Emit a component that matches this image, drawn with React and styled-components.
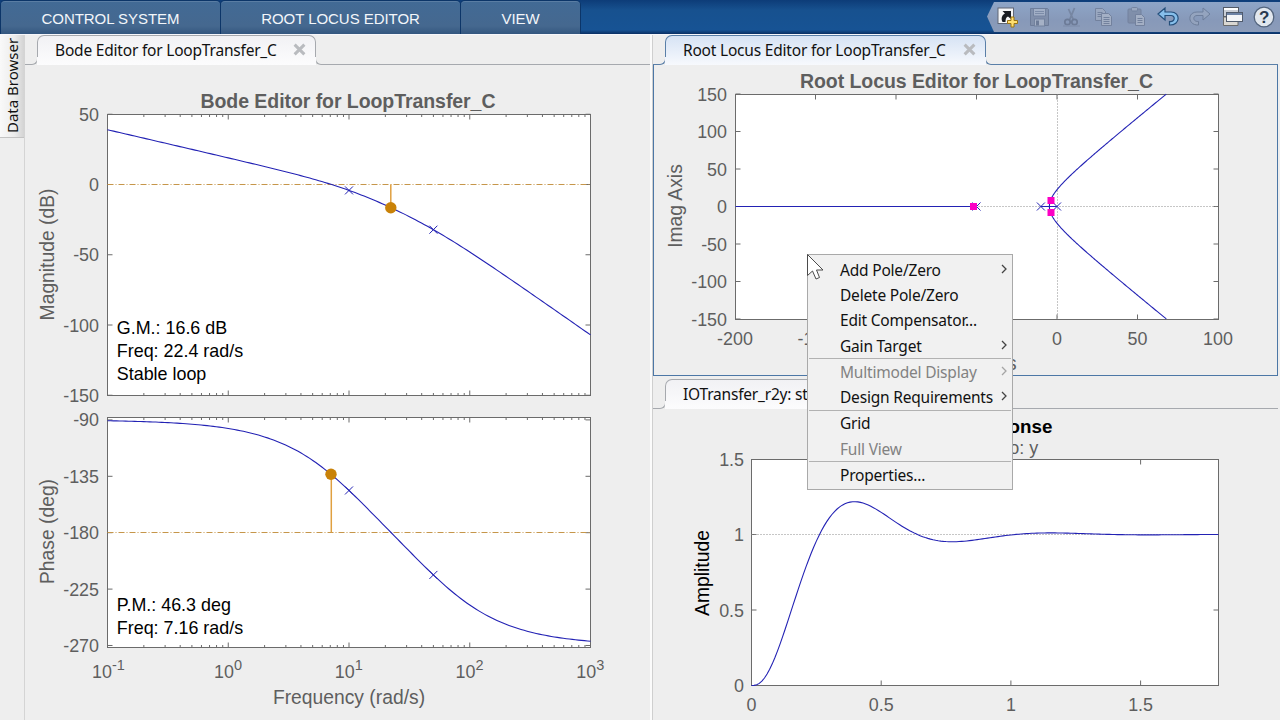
import React from 'react'
import styled, { createGlobalStyle } from 'styled-components'

const GlobalStyle = createGlobalStyle`
  * {
    box-sizing: border-box;
  }

  body {
    margin: 0;
    overflow: hidden;
    background: #eeeeee;
  }
`

const BLUE = '#2322b4'
const AXIS = '#6b6b6b'
const LABEL = '#5e5e5e'
const ORANGE = '#c98208'

const decades = [-1, 0, 1, 2, 3]
const toPath = (points) =>
  'M' + points.map(([x, y]) => `${x.toFixed(2)},${y.toFixed(2)}`).join('L')

const range = (from, to, count) =>
  Array.from({ length: count + 1 }, (_, i) => from + ((to - from) * i) / count)

// open loop: K / (s (s/10 + 1) (s/50 + 1))
const K = 8.896
const magnitude = (w) =>
  20 * Math.log10(K / (w * Math.hypot(1, w / 10) * Math.hypot(1, w / 50)))
const phase = (w) =>
  -90 - ((Math.atan(w / 10) + Math.atan(w / 50)) * 180) / Math.PI

const freqX = (w) => 82.5 + (Math.log10(w) + 1) * 120.75
const magY = (db) => 119.5 - db * 1.405
const phaseY = (deg) => 354.9 - (deg + 90) * 1.2533
const freqs = range(-1, 3, 160).map((e) => 10 ** e)

const realX = (v) => 404 + v * 1.61
const imagY = (v) => 141.5 - v * 0.75
const locus = range(0, 1, 150).map((t) => {
  const re = -4.7247 + (67.9 + 4.7247) * t * t
  return [re, Math.sqrt(Math.max(0, 500 + 120 * re + 3 * re * re))]
})

const timeX = (t) => 98.5 + t * 259.4
const ampY = (v) => 276.5 - v * 151

const stepResponse = () => {
  const k = K * 500
  const dt = 0.0005
  const points = []
  let [y, v, a] = [0, 0, 0]
  for (let i = 0; i <= 3600; i++) {
    if (i % 20 === 0) points.push([timeX(i * dt), ampY(y)])
    a += dt * (k - 60 * a - 500 * v - k * y)
    v += dt * a
    y += dt * v
  }
  return points
}

const Ticks = ({ x1, x2, y1, y2, xs = [], ys = [], size = 5 }) => (
  <g stroke={AXIS}>
    {xs.map((x) => (
      <path key={x} d={`M${x},${y1}v${size}M${x},${y2}v${-size}`} />
    ))}
    {ys.map((y) => (
      <path key={y} d={`M${x1},${y}h${size}M${x2},${y}h${-size}`} />
    ))}
  </g>
)

const Box = ({ x1, x2, y1, y2 }) => (
  <rect x={x1} y={y1} width={x2 - x1} height={y2 - y1} fill="#fff" stroke={AXIS} />
)

const Cross = ({ x, y }) => (
  <path d={`M${x - 4},${y - 4}l8,8m0,-8l-8,8`} stroke={BLUE} fill="none" />
)

const minorXs = decades
  .slice(0, 4)
  .flatMap((d) => [2, 3, 4, 5, 6, 7, 8, 9].map((m) => freqX(m * 10 ** d)))
const majorXs = [0, 1, 2].map((d) => freqX(10 ** d))

const BodePlot = () => {
  const mag = { x1: 82.5, x2: 565.5, y1: 49.5, y2: 330.5 }
  const ph = { x1: 82.5, x2: 565.5, y1: 352.5, y2: 582.5 }
  return (
    <Chart>
      <Title x="323" y="42.500" textLength="295">
        Bode Editor for LoopTransfer_C
      </Title>
      <Box {...mag} />
      <Ticks {...mag} xs={minorXs} size={2.5} />
      <Ticks {...mag} xs={majorXs} ys={[50, 0, -50, -100, -150].map(magY)} />
      {[50, 0, -50, -100, -150].map((v) => (
        <Tick key={v} x="74" y={magY(v) + 6.5} $end>
          {v}
        </Tick>
      ))}
      <DashDot d="M82.500,119.500H565.500" />
      <path d="M365.800,119.500v23" stroke="#e0a040" strokeWidth="1.5" />
      <Curve d={toPath(freqs.map((w) => [freqX(w), magY(magnitude(w))]))} />
      <Cross x={freqX(10)} y={magY(magnitude(10))} />
      <Cross x={freqX(50)} y={magY(magnitude(50))} />
      <circle cx="365.800" cy="142.700" r="5.700" fill={ORANGE} />
      <Note x="91.800" y="269.400">G.M.: 16.6 dB</Note>
      <Note x="91.800" y="292.400">Freq: 22.4 rad/s</Note>
      <Note x="91.800" y="315">Stable loop</Note>
      <AxisLabel transform="translate(28.500 189.500) rotate(-90)">Magnitude (dB)</AxisLabel>

      <Box {...ph} />
      <Ticks {...ph} xs={minorXs} size={2.5} />
      <Ticks {...ph} xs={majorXs} ys={[-90, -135, -180, -225, -270].map(phaseY)} />
      {[-90, -135, -180, -225, -270].map((v) => (
        <Tick key={v} x="74" y={phaseY(v) + 6.5} $end>
          {v}
        </Tick>
      ))}
      <DashDot d="M82.500,467.500H565.500" />
      <path d="M306.300,409v58.500" stroke="#e0a040" strokeWidth="1.500" />
      <Curve d={toPath(freqs.map((w) => [freqX(w), phaseY(phase(w))]))} />
      <Cross x={freqX(10)} y={phaseY(phase(10))} />
      <Cross x={freqX(50)} y={phaseY(phase(50))} />
      <circle cx="306" cy="409.300" r="5.700" fill={ORANGE} />
      <Note x="91.800" y="546.400">P.M.: 46.3 deg</Note>
      <Note x="91.800" y="569.400">Freq: 7.16 rad/s</Note>
      <AxisLabel transform="translate(28.500 466.500) rotate(-90)">Phase (deg)</AxisLabel>
      {decades.map((d) => (
        <Tick key={d} x={freqX(10 ** d) - (d < 0 ? 15.5 : 14.2)} y="612.700">
          10
          <tspan dy="-7.800" fontSize="14.500">
            {d}
          </tspan>
        </Tick>
      ))}
      <AxisLabel x="324" y="638.500">Frequency (rad/s)</AxisLabel>
    </Chart>
  )
}

const RootLocusPlot = () => {
  const box = { x1: 82.5, x2: 565.5, y1: 29.5, y2: 254.5 }
  const reals = [-200, -150, -100, -50, 0, 50, 100]
  const imags = [150, 100, 50, 0, -50, -100, -150]
  return (
    <Chart>
      <Title x="323.500" y="22.500" textLength="353">
        Root Locus Editor for LoopTransfer_C
      </Title>
      <Box {...box} />
      <Ticks {...box} xs={reals.slice(1, 6).map(realX)} ys={imags.map(imagY)} />
      <Dotted d="M82.500,141.500H565.500M404.500,29.500V254.500" />
      {imags.map((v) => (
        <Tick key={v} x="74" y={imagY(v) + 6.5} $end>
          {v}
        </Tick>
      ))}
      {reals.map((v) => (
        <Tick key={v} x={realX(v)} y="280" $middle>
          {v}
        </Tick>
      ))}
      <Curve d={`M82.500,141.500H${realX(-50)}M${realX(-10)},141.500H${realX(0)}`} />
      <Curve d={toPath(locus.map(([re, im]) => [realX(re), imagY(im)]))} />
      <Curve d={toPath(locus.map(([re, im]) => [realX(re), imagY(-im)]))} />
      {[-50, -10, 0].map((v) => (
        <Cross key={v} x={realX(v)} y={141.5} />
      ))}
      {[
        [320.5, 141.5],
        [398, 135.5],
        [398, 147.5],
      ].map(([x, y]) => (
        <rect key={`${x}${y}`} x={x - 3.5} y={y - 3.5} width="7" height="7" fill="#fb00c4" />
      ))}
      <AxisLabel transform="translate(28.500 141) rotate(-90)">Imag Axis</AxisLabel>
      <AxisLabel x="323.500" y="305">Real Axis</AxisLabel>
    </Chart>
  )
}

const StepPlot = () => {
  const box = { x1: 98.5, x2: 565.5, y1: 50.5, y2: 276.5 }
  const times = [0, 0.5, 1, 1.5]
  const amps = [0, 0.5, 1, 1.5]
  return (
    <Chart>
      <Title x="331.500" y="23.500" $dark>
        Step Response
      </Title>
      <Subtitle x="335" y="44.500">From: r  To: y</Subtitle>
      <Box {...box} />
      <Ticks {...box} xs={times.map(timeX)} ys={amps.slice(0, 3).map(ampY)} />
      <Dotted d="M98.500,125.500H565.500" />
      <Curve d={toPath(stepResponse())} />
      {amps.map((v) => (
        <Tick key={v} x="91" y={ampY(v) + 6.5} $end>
          {v}
        </Tick>
      ))}
      {times.map((v) => (
        <Tick key={v} x={timeX(v)} y="302.400" $middle>
          {v}
        </Tick>
      ))}
      <AxisLabel transform="translate(56 164) rotate(-90)" $dark>
        Amplitude
      </AxisLabel>
    </Chart>
  )
}

const NewIcon = () => (
  <ToolIcon>
    <rect x="2" y="2" width="15.500" height="15.500" fill="#f4f5f7" stroke="#606775" />
    <path d="M6.500,16C4.500,12 6.500,8.500 9,7.500L6.500,5H15V13L12,10.500C10,11.500 9.500,13 9.500,16z" fill="#171b22" />
    <path d="M15,11h3v3.500h3.500v3h-3.500v3.500h-3v-3.500h-3.500v-3h3.500z" fill="#ffdf70" stroke="#9b7413" />
  </ToolIcon>
)

const SaveIcon = () => (
  <ToolIcon $dim>
    <path d="M2.500,2.500h17l1,1v16h-18z" fill="#7c89a2" stroke="#5d6b86" />
    <path d="M5.500,3v7h12v-7" fill="#b1bacb" stroke="#66748f" />
    <path d="M7,5.500h9M7,7.500h9" stroke="#75829b" />
    <rect x="6.500" y="13" width="10" height="7" fill="#b8c0cf" stroke="#66748f" />
    <rect x="8" y="14.500" width="3" height="5" fill="#5d6b85" />
  </ToolIcon>
)

const CutIcon = () => (
  <ToolIcon $dim>
    <path d="M14.500,2L9.500,14M8.500,3L13.500,14" fill="none" stroke="#6b7891" strokeWidth="1.800" />
    <circle cx="7.500" cy="16" r="2.700" fill="none" stroke="#5c6983" strokeWidth="1.700" />
    <circle cx="14.500" cy="16" r="2.700" fill="none" stroke="#5c6983" strokeWidth="1.700" />
    <path d="M3,20h17" stroke="#7684a0" strokeWidth="2" opacity="0.500" />
  </ToolIcon>
)

const CopyIcon = () => (
  <ToolIcon $dim>
    <path d="M3.500,2.500h7l3,3v9h-10z" fill="#a5afc2" stroke="#66738d" />
    <path d="M5.500,6.500h5M5.500,8.500h5M5.500,10.500h5" stroke="#66738d" />
    <path d="M9.500,7.500h7l3,3v9h-10z" fill="#b5bdcc" stroke="#66738d" />
    <path d="M11.500,11.500h6M11.500,13.500h6M11.500,15.500h6M11.500,17.500h6" stroke="#66738d" />
  </ToolIcon>
)

const PasteIcon = () => (
  <ToolIcon $dim>
    <rect x="3" y="3" width="13" height="14" rx="1" fill="#7a879f" stroke="#66738d" />
    <rect x="6.500" y="1.500" width="6" height="3.500" rx="1" fill="#a2adc0" stroke="#66738d" />
    <path d="M10.500,8.500h6l3,3v8h-9z" fill="#b5bdcc" stroke="#66738d" />
    <path d="M12.500,12.500h5M12.500,14.500h5M12.500,16.500h5" stroke="#66738d" />
  </ToolIcon>
)

const arrow = 'M1,8L8,2V6H14C24,6 23.500,19.500 12.500,19V15.500C18.500,16 18.500,9.500 14,9.500H8V14z'

const UndoIcon = () => (
  <ToolIcon>
    <path d={arrow} fill="#86bfeb" stroke="#244f7b" strokeWidth="1.200" />
  </ToolIcon>
)

const RedoIcon = () => (
  <ToolIcon $dim>
    <path d={arrow} transform="matrix(-1 0 0 1 22 0)" fill="#9ba9c0" stroke="#5d6d88" />
  </ToolIcon>
)

const WindowsIcon = () => (
  <ToolIcon>
    <rect x="2.500" y="1.500" width="15" height="9" fill="#c9ced6" stroke="#525a67" />
    <path d="M3,3h14" stroke="#fff" strokeWidth="2" />
    <path d="M2.500,11V19.500H17V11z" fill="#d9d7d2" stroke="#6a6b6c" />
    <rect x="5.500" y="6.500" width="16" height="9" fill="#f3f5f8" stroke="#505b6c" />
    <path d="M6,8h15" stroke="#6d83a6" strokeWidth="2" />
  </ToolIcon>
)

const HelpIcon = () => (
  <ToolIcon>
    <circle cx="11" cy="11" r="9.800" fill="#e1e7ee" stroke="#53657e" strokeWidth="1.300" />
    <text x="11" y="17" textAnchor="middle" fontFamily="Liberation Sans, sans-serif" fontSize="17" fontWeight="700" fill="#27394f">
      ?
    </text>
  </ToolIcon>
)

const Panel = ({ title, width, active, closable = true, children }) => (
  <PanelFrame>
    <TabStrip>
      <StripLead $active={active} />
      <Tab $active={active} $width={width}>
        {title}
        {closable && (
          <CloseIcon viewBox="0 0 12 12">
            <path d="M1.500,1.500L10.500,10.500M10.500,1.500L1.500,10.500" />
          </CloseIcon>
        )}
      </Tab>
      <StripTail $active={active} />
    </TabStrip>
    <PanelBody $active={active}>{children}</PanelBody>
  </PanelFrame>
)

const menuGroups = [
  [
    { label: 'Add Pole/Zero', submenu: true },
    { label: 'Delete Pole/Zero' },
    { label: 'Edit Compensator...' },
    { label: 'Gain Target', submenu: true },
  ],
  [
    { label: 'Multimodel Display', submenu: true, disabled: true },
    { label: 'Design Requirements', submenu: true },
  ],
  [{ label: 'Grid' }, { label: 'Full View', disabled: true }],
  [{ label: 'Properties...' }],
]

const ContextMenu = () => (
  <Menu>
    {menuGroups.map((group) => (
      <MenuGroup key={group[0].label}>
        {group.map(({ label, submenu, disabled }) => (
          <MenuItem key={label} $disabled={disabled}>
            {label}
            {submenu && (
              <Chevron viewBox="0 0 6 10">
                <path d="M1,1L5,5L1,9" />
              </Chevron>
            )}
          </MenuItem>
        ))}
      </MenuGroup>
    ))}
  </Menu>
)

const App = () => (
  <Window>
    <GlobalStyle />
    <Ribbon>
      <RibbonTab $width={219}>CONTROL SYSTEM</RibbonTab>
      <RibbonTab $width={239}>ROOT LOCUS EDITOR</RibbonTab>
      <RibbonTab $width={119}>VIEW</RibbonTab>
      <QuickAccess>
        <NewIcon />
        <SaveIcon />
        <CutIcon />
        <CopyIcon />
        <PasteIcon />
        <UndoIcon />
        <RedoIcon />
        <WindowsIcon />
        <HelpIcon />
      </QuickAccess>
    </Ribbon>
    <Workspace>
      <SideBar>
        <SideTab>Data Browser</SideTab>
      </SideBar>
      <LeftColumn>
        <Panel title="Bode Editor for LoopTransfer_C" width={279}>
          <BodePlot />
        </Panel>
      </LeftColumn>
      <RightColumn>
        <Panel title="Root Locus Editor for LoopTransfer_C" width={321} active>
          <RootLocusPlot />
        </Panel>
        <Panel title="IOTransfer_r2y: step" width={200}>
          <StepPlot />
        </Panel>
      </RightColumn>
    </Workspace>
    <ContextMenu />
    <Pointer viewBox="0 0 18 27">
      <path d="M0.500,0.500V21.500L5.500,17L9,25L12.500,23.500L9.500,16H16z" />
    </Pointer>
  </Window>
)

const Window = styled.div`
  position: relative;
  display: flex;
  flex-direction: column;
  width: 1280px;
  height: 720px;
  overflow: hidden;
  font-family: 'Noto Sans', 'Open Sans', sans-serif;
  font-size: 15.5px;
  letter-spacing: -0.2px;
  color: #111;
`

const Ribbon = styled.header`
  display: flex;
  gap: 1px;
  flex: 0 0 34px;
  padding: 1px 0 0 1px;
  background: linear-gradient(#0d3c78, #17518f 30%, #175394 88%, #0a2f63);
`

const RibbonTab = styled.div`
  display: flex;
  align-items: center;
  justify-content: center;
  width: ${(p) => p.$width}px;
  border-radius: 4px 4px 0 0;
  border-top: 1px solid #5a7da3;
  background: linear-gradient(#426a95, #45688f 75%, #34577f);
  box-shadow: 0 0 0 1px #0c3568;
  color: #f3f6fa;
  font: 15px 'Liberation Sans', Arial, sans-serif;
  letter-spacing: -0.05px;
`

const QuickAccess = styled.div`
  display: flex;
  align-items: center;
  justify-content: space-between;
  width: 293px;
  height: 30px;
  margin: 1px 0 0 auto;
  padding: 0 5px 1px 9px;
  clip-path: polygon(0 48%, 7px 0, 100% 0, 100% 100%, 7px 100%);
  background: linear-gradient(#8ea5c7, #8799b9 60%, #8c9cb9);
`

const ToolIcon = styled.svg.attrs({ viewBox: '0 0 22 22' })`
  width: 22px;
  height: 22px;
  opacity: ${(p) => (p.$dim ? 0.62 : 1)};
`

const Workspace = styled.main`
  display: flex;
  flex: 1;
  min-height: 0;
  border-top: 1px solid #f7f7fb;
`

const SideBar = styled.aside`
  width: 25px;
  border-right: 1px solid #d4d4d4;
  background: #eeeeee;
`

const SideTab = styled.div`
  display: flex;
  align-items: center;
  justify-content: center;
  width: 24px;
  height: 103px;
  padding-top: 1px;
  border-top: 1px solid #c3c3c3;
  background: linear-gradient(270deg, #f9f9f9, #ececec 60%, #d3d3d3);
  writing-mode: vertical-rl;
  transform: rotate(180deg);
  font-size: 15px;
  letter-spacing: 0;
`

const LeftColumn = styled.section`
  display: flex;
  width: 625px;
`

const RightColumn = styled.section`
  display: grid;
  grid-template-rows: 341px 1fr;
  row-gap: 3px;
  flex: 1;
  margin: 0 2px;
  border-left: 1px solid #cfcfcf;
  box-shadow: -2px 0 0 #fbfbfb;
`

const PanelFrame = styled.article`
  display: flex;
  flex-direction: column;
  flex: 1;
  min-width: 0;
  min-height: 0;
`

const tabLine = (p) => (p.$active ? '#5a7fa8' : '#a6a9ae')

const TabStrip = styled.div`
  display: flex;
  align-items: flex-end;
  flex: 0 0 30px;
`

const StripLead = styled.div`
  width: 13px;
  height: 22px;
  border: 0 solid ${tabLine};
  border-width: 0 1px 1px 0;
  border-bottom-right-radius: 6px;
`

const StripTail = styled.div`
  flex: 1;
  height: 22px;
  margin-left: -1px;
  border: 0 solid ${tabLine};
  border-width: 0 0 1px 1px;
  border-bottom-left-radius: 6px;
`

const Tab = styled.div`
  position: relative;
  display: flex;
  align-items: center;
  justify-content: space-between;
  width: ${(p) => p.$width}px;
  height: 30px;
  margin-left: -1px;
  padding: 0 9px 1px 18px;
  border-radius: 7px 7px 0 0;
  background: ${(p) =>
    p.$active
      ? 'linear-gradient(#d5e2f4, #f7f9fd)'
      : 'linear-gradient(#f1f1f4, #fcfcfd)'};
  white-space: nowrap;

  &::before {
    content: '';
    position: absolute;
    inset: 0 0 8px;
    border: 1px solid ${tabLine};
    border-bottom: 0;
    border-radius: 7px 7px 0 0;
  }
`

const CloseIcon = styled.svg`
  width: 13px;
  height: 13px;
  margin-right: 1px;
  fill: none;
  stroke: #b9bbbf;
  stroke-width: 2.8;
`

const PanelBody = styled.div`
  flex: 1;
  min-height: 0;
  ${(p) => p.$active && 'box-shadow: inset 1px 0 #4c77a6, inset -1px -1px #4c77a6;'}
`

const Chart = styled.svg`
  display: block;
  width: 100%;
  height: 100%;
  font-family: 'Liberation Sans', Arial, sans-serif;
  letter-spacing: 0;
`

const Title = styled.text`
  fill: ${(p) => (p.$dark ? '#000' : LABEL)};
  font-size: ${(p) => (p.$dark ? 18.8 : 19.5)}px;
  font-weight: 700;
  text-anchor: middle;
`

const Tick = styled.text`
  fill: ${LABEL};
  font-size: 17.9px;
  text-anchor: ${(p) => (p.$end ? 'end' : p.$middle ? 'middle' : 'start')};
`

const AxisLabel = styled.text`
  fill: ${(p) => (p.$dark ? '#000' : LABEL)};
  font-size: 19.3px;
  text-anchor: middle;
`

const Subtitle = styled(AxisLabel)`
  font-size: 18px;
`

const Note = styled.text`
  fill: #000;
  font-size: 17.9px;
`

const Curve = styled.path`
  fill: none;
  stroke: ${BLUE};
  stroke-width: 1.1;
`

const DashDot = styled.path`
  stroke: #c6964a;
  stroke-dasharray: 6 2 1 2;
`

const Dotted = styled.path`
  stroke: #8d8d8d;
  stroke-dasharray: 1 2;
`

const Menu = styled.div`
  position: absolute;
  top: 254px;
  left: 807px;
  width: 206px;
  height: 236px;
  padding: 2px 1px;
  border: 1px solid #a9a9a9;
  background: #f1f1f1;
`

const MenuGroup = styled.div`
  & + & {
    border-top: 1px solid #b2b2b2;
  }
`

const MenuItem = styled.div`
  display: flex;
  align-items: center;
  justify-content: space-between;
  height: 25.3px;
  padding: 0 4px 0 31px;
  color: ${(p) => (p.$disabled ? '#828282' : '#111')};
  stroke: ${(p) => (p.$disabled ? '#a5a5a5' : '#444')};
  white-space: nowrap;
`

const Chevron = styled.svg`
  width: 6px;
  height: 10px;
  margin-top: -2px;
  fill: none;
  stroke-width: 1.3;
`

const Pointer = styled.svg`
  position: absolute;
  top: 254px;
  left: 807px;
  width: 18px;
  height: 27px;
  fill: #fff;
  stroke: #4b4b4b;
`

export default App
